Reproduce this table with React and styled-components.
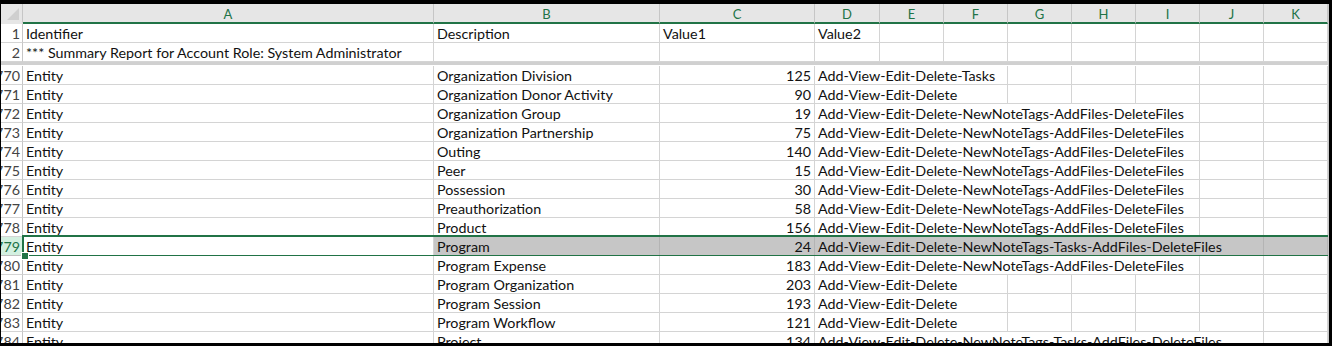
import React from "react";
import styled, { createGlobalStyle } from "styled-components";

const GREEN = "#217346";
const GRID = "#d4d4d4";

const GlobalStyle = createGlobalStyle`
    html, body {
        margin: 0;
        padding: 0;
        background: #000;
    }
    * {
        box-sizing: border-box;
    }
`;

const COLS = "22px 411px 226px 155px 65px repeat(7, 64px)";

const Frame = styled.div`
    width: 1332px;
    height: 346px;
    background: #000;
    padding: 4px 3px 3px 1px;
`;

const Sheet = styled.div`
    height: 100%;
    background: #fff;
    overflow: hidden;
    font-family: Lato, "Open Sans", sans-serif;
    font-size: 14.3px;
    color: #111;
    border-right: 1px solid #c8c8c8;
`;

const HeaderRow = styled.div`
    display: grid;
    grid-template-columns: ${COLS};
    height: 20px;
    background: #e6e6e6;
`;

const Corner = styled.div`
    position: relative;
    border-right: 1px solid #c6c6c6;
    border-bottom: 2px solid #e6e6e6;
    &::after {
        content: "";
        position: absolute;
        right: 3px;
        bottom: 2px;
        width: 0;
        height: 0;
        border-left: 12px solid transparent;
        border-bottom: 12px solid #cfcfcf;
    }
`;

const ColHead = styled.div`
    display: flex;
    align-items: center;
    justify-content: center;
    border-right: 1px solid #c6c6c6;
    border-bottom: 2px solid ${GREEN};
    color: ${GREEN};
    font-size: 13px;
    padding-top: 1px;
`;

const Row = styled.div`
    position: relative;
    display: grid;
    grid-template-columns: ${COLS};
    height: 19px;
    ${(p) =>
        p.$selected &&
        `
        &::after {
            content: "";
            position: absolute;
            left: 21px;
            right: -6px;
            top: -2px;
            bottom: -1px;
            border: 2px solid ${GREEN};
            pointer-events: none;
        }
        &::before {
            content: "";
            position: absolute;
            left: 20px;
            bottom: -4px;
            width: 6px;
            height: 6px;
            background: ${GREEN};
            border: 1px solid #fff;
            z-index: 2;
        }
    `}
`;

const RowHead = styled.div`
    display: flex;
    justify-content: flex-end;
    align-items: center;
    overflow: hidden;
    white-space: nowrap;
    padding-right: 2px;
    border-right: 1px solid #c6c6c6;
    border-bottom: 1px solid ${(p) => (p.$selected ? "#bfbfbf" : GRID)};
    background: ${(p) => (p.$selected ? "#d3f0e0" : "#fff")};
    color: ${(p) => (p.$selected ? GREEN : "#444")};
`;

const Cell = styled.div`
    display: flex;
    align-items: center;
    justify-content: ${(p) => (p.$right ? "flex-end" : "flex-start")};
    grid-column: span ${(p) => p.$span || 1};
    padding: 1px 3px 0;
    white-space: nowrap;
    overflow: hidden;
    border-right: 1px solid ${(p) => (p.$fill ? "#b4b4b4" : GRID)};
    border-bottom: 1px solid ${(p) => (p.$fill ? "#b4b4b4" : GRID)};
    background: ${(p) => (p.$fill ? "#c6c6c6" : "#fff")};
`;

const FreezeBar = styled.div`
    height: 3px;
    margin-bottom: 1px;
    background: #d0d0d0;
`;

const LETTERS = ["A", "B", "C", "D", "E", "F", "G", "H", "I", "J", "K"];

const SHORT = "Add-View-Edit-Delete";
const FILES = "Add-View-Edit-Delete-NewNoteTags-AddFiles-DeleteFiles";
const TASKS = "Add-View-Edit-Delete-NewNoteTags-Tasks-AddFiles-DeleteFiles";

const rows = [
    { n: "1770", b: "Organization Division", c: 125, d: "Add-View-Edit-Delete-Tasks", span: 3 },
    { n: "1771", b: "Organization Donor Activity", c: 90, d: SHORT, span: 3 },
    { n: "1772", b: "Organization Group", c: 19, d: FILES, span: 6 },
    { n: "1773", b: "Organization Partnership", c: 75, d: FILES, span: 6 },
    { n: "1774", b: "Outing", c: 140, d: FILES, span: 6 },
    { n: "1775", b: "Peer", c: 15, d: FILES, span: 6 },
    { n: "1776", b: "Possession", c: 30, d: FILES, span: 6 },
    { n: "1777", b: "Preauthorization", c: 58, d: FILES, span: 6 },
    { n: "1778", b: "Product", c: 156, d: FILES, span: 6 },
    { n: "1779", b: "Program", c: 24, d: TASKS, span: 7, selected: true },
    { n: "1780", b: "Program Expense", c: 183, d: FILES, span: 6 },
    { n: "1781", b: "Program Organization", c: 203, d: SHORT, span: 3 },
    { n: "1782", b: "Program Session", c: 193, d: SHORT, span: 3 },
    { n: "1783", b: "Program Workflow", c: 121, d: SHORT, span: 3 },
    { n: "1784", b: "Project", c: 134, d: TASKS, span: 7 },
];

// columns D..K = 8 slots, the D text swallows `span` of them
const Blanks = ({ count, fill }) =>
    Array.from({ length: count }).map((_, i) => <Cell key={i} $fill={fill} />);

const DataRow = ({ r }) => {
    const sel = !!r.selected;
    return (
        <Row $selected={sel}>
            <RowHead $selected={sel}>{r.n}</RowHead>
            <Cell>Entity</Cell>
            <Cell $fill={sel}>{r.b}</Cell>
            <Cell $fill={sel} $right>
                {r.c}
            </Cell>
            <Cell $fill={sel} $span={r.span}>
                {r.d}
            </Cell>
            <Blanks count={8 - r.span} fill={sel} />
        </Row>
    );
};

export default function App() {
    return (
        <>
            <GlobalStyle />
            <Frame>
                <Sheet>
                    <HeaderRow>
                        <Corner />
                        {LETTERS.map((l) => (
                            <ColHead key={l}>{l}</ColHead>
                        ))}
                    </HeaderRow>
                    <Row>
                        <RowHead>1</RowHead>
                        <Cell>Identifier</Cell>
                        <Cell>Description</Cell>
                        <Cell>Value1</Cell>
                        <Cell>Value2</Cell>
                        <Blanks count={7} />
                    </Row>
                    <Row>
                        <RowHead>2</RowHead>
                        <Cell>*** Summary Report for Account Role: System Administrator</Cell>
                        <Cell />
                        <Cell />
                        <Blanks count={8} />
                    </Row>
                    <FreezeBar />
                    {rows.map((r) => (
                        <DataRow key={r.n} r={r} />
                    ))}
                </Sheet>
            </Frame>
        </>
    );
}
